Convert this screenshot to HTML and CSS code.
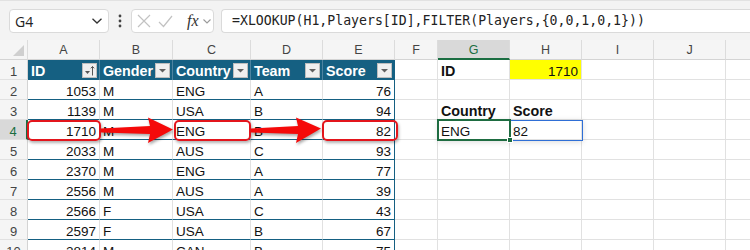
FILE: index.html
```html
<!DOCTYPE html>
<html>
<head>
<meta charset="utf-8">
<link rel="stylesheet" href="styles.css">
</head>
<body>
<div class="fbar">
  <div class="namebox"><span>G4</span><svg width="10" height="6" viewBox="0 0 10 6"><polyline points="0.5,0.8 5,5 9.5,0.8" fill="none" stroke="#333" stroke-width="1.3"/></svg></div>
  <div class="dots"><svg width="4" height="14" viewBox="0 0 4 14"><circle cx="2" cy="2" r="1.4" fill="#444"/><circle cx="2" cy="7" r="1.4" fill="#444"/><circle cx="2" cy="12" r="1.4" fill="#444"/></svg></div>
  <div class="fxbox">
    <svg class="ico-x" width="14" height="14" viewBox="0 0 14 14"><path d="M1 1L13 13M13 1L1 13" stroke="#c2c2c2" stroke-width="1.2" fill="none"/></svg>
    <svg class="ico-ok" width="15" height="13" viewBox="0 0 15 13"><polyline points="1,7 5.5,11.5 14,1" stroke="#c2c2c2" stroke-width="1.2" fill="none"/></svg>
    <span class="fx">fx</span>
    <svg class="ico-chev" width="8" height="5" viewBox="0 0 8 5"><polyline points="0.5,0.5 4,4 7.5,0.5" stroke="#9a9a9a" stroke-width="1.1" fill="none"/></svg>
  </div>
  <div class="formula">=XLOOKUP(H1,Players[ID],FILTER(Players,{0,0,1,0,1}))</div>
</div>

<div class="sheet">
  <!-- column headers -->
  <div class="ch corner"><span class="tri"></span></div>
  <div class="ch">A</div><div class="ch">B</div><div class="ch">C</div><div class="ch">D</div><div class="ch">E</div>
  <div class="ch">F</div><div class="ch sel">G</div><div class="ch">H</div><div class="ch">I</div><div class="ch">J</div><div class="ch k"></div>

  <!-- row 1 -->
  <div class="rh">1</div>
  <div class="th"><span>ID</span><span class="fbtn"><svg width="13" height="13" viewBox="0 0 13 13"><polygon points="2,7 7,7 4.5,10" fill="#555"/><path d="M9.5 11.5V2.5M7.8 4.3L9.5 2.5L11.2 4.3" stroke="#555" stroke-width="1" fill="none"/></svg></span></div>
  <div class="th"><span>Gender</span><span class="fbtn"><svg width="13" height="13" viewBox="0 0 13 13"><polygon points="3,5 10,5 6.5,8.5" fill="#606060"/></svg></span></div>
  <div class="th"><span>Country</span><span class="fbtn"><svg width="13" height="13" viewBox="0 0 13 13"><polygon points="3,5 10,5 6.5,8.5" fill="#606060"/></svg></span></div>
  <div class="th"><span>Team</span><span class="fbtn"><svg width="13" height="13" viewBox="0 0 13 13"><polygon points="3,5 10,5 6.5,8.5" fill="#606060"/></svg></span></div>
  <div class="th te"><span>Score</span><span class="fbtn"><svg width="13" height="13" viewBox="0 0 13 13"><polygon points="3,5 10,5 6.5,8.5" fill="#606060"/></svg></span></div>
  <div class="c"></div><div class="c b">ID</div><div class="c n yellow">1710</div><div class="c"></div><div class="c"></div><div class="c k"></div>

  <!-- row 2 -->
  <div class="rh">2</div>
  <div class="c t n">1053</div><div class="c t">M</div><div class="c t">ENG</div><div class="c t">A</div><div class="c t te n">76</div>
  <div class="c"></div><div class="c"></div><div class="c"></div><div class="c"></div><div class="c"></div><div class="c k"></div>

  <!-- row 3 -->
  <div class="rh">3</div>
  <div class="c t n">1139</div><div class="c t">M</div><div class="c t">USA</div><div class="c t">B</div><div class="c t te n">94</div>
  <div class="c"></div><div class="c b">Country</div><div class="c b">Score</div><div class="c"></div><div class="c"></div><div class="c k"></div>

  <!-- row 4 -->
  <div class="rh sel">4</div>
  <div class="c t n">1710</div><div class="c t">M</div><div class="c t">ENG</div><div class="c t">B</div><div class="c t te n">82</div>
  <div class="c"></div><div class="c">ENG</div><div class="c">82</div><div class="c"></div><div class="c"></div><div class="c k"></div>

  <!-- row 5 -->
  <div class="rh">5</div>
  <div class="c t n">2033</div><div class="c t">M</div><div class="c t">AUS</div><div class="c t">C</div><div class="c t te n">93</div>
  <div class="c"></div><div class="c"></div><div class="c"></div><div class="c"></div><div class="c"></div><div class="c k"></div>

  <!-- row 6 -->
  <div class="rh">6</div>
  <div class="c t n">2370</div><div class="c t">M</div><div class="c t">ENG</div><div class="c t">A</div><div class="c t te n">77</div>
  <div class="c"></div><div class="c"></div><div class="c"></div><div class="c"></div><div class="c"></div><div class="c k"></div>

  <!-- row 7 -->
  <div class="rh">7</div>
  <div class="c t n">2556</div><div class="c t">M</div><div class="c t">AUS</div><div class="c t">A</div><div class="c t te n">39</div>
  <div class="c"></div><div class="c"></div><div class="c"></div><div class="c"></div><div class="c"></div><div class="c k"></div>

  <!-- row 8 -->
  <div class="rh">8</div>
  <div class="c t n">2566</div><div class="c t">F</div><div class="c t">USA</div><div class="c t">C</div><div class="c t te n">43</div>
  <div class="c"></div><div class="c"></div><div class="c"></div><div class="c"></div><div class="c"></div><div class="c k"></div>

  <!-- row 9 -->
  <div class="rh">9</div>
  <div class="c t n">2597</div><div class="c t">F</div><div class="c t">USA</div><div class="c t">B</div><div class="c t te n">67</div>
  <div class="c"></div><div class="c"></div><div class="c"></div><div class="c"></div><div class="c"></div><div class="c k"></div>

  <!-- row 10 -->
  <div class="rh">10</div>
  <div class="c t n">2814</div><div class="c t">M</div><div class="c t">CAN</div><div class="c t">B</div><div class="c t te n">75</div>
  <div class="c"></div><div class="c"></div><div class="c"></div><div class="c"></div><div class="c"></div><div class="c k"></div>

  <!-- overlays -->
  <div class="spill"></div>
  <div class="cursor"><span class="handle"></span></div>
  <div class="hl hl-a"></div>
  <div class="hl hl-c"></div>
  <div class="hl hl-e"></div>
  <svg class="arrows" width="750" height="210" viewBox="0 0 750 210">
    <polygon class="arrow" points="101,88.5 150,86 148,77.5 173,89.5 148,103 150,94 101,92.5"/>
    <polygon class="arrow" points="251,88.5 298,86 296,77.5 321,88.5 296,103 298,94 251,92.5"/>
  </svg>
</div>
</body>
</html>
```

FILE: styles.css
```css
* { box-sizing: border-box; margin: 0; padding: 0; }

body {
  width: 750px;
  height: 250px;
  overflow: hidden;
  background: #ffffff;
  font-family: "Liberation Sans", Arial, sans-serif;
  color: #111;
}

/* ---------- formula bar ---------- */
.fbar {
  height: 40px;
  background: #f3f3f3;
  border-top: 1px solid #e2e2e2;
  display: flex;
  align-items: flex-start;
  padding: 8px 0 0 9px;
}

.namebox {
  width: 100px;
  height: 24px;
  background: #fff;
  border: 1px solid #dadada;
  border-radius: 4px;
  display: flex;
  align-items: center;
  justify-content: space-between;
  padding: 0 6px 0 5px;
  font-family: "Open Sans", "Noto Sans", sans-serif;
  font-size: 14px;
  color: #222;
}

.dots {
  width: 22px;
  height: 24px;
  display: flex;
  align-items: center;
  justify-content: center;
}

.fxbox {
  width: 83px;
  height: 24px;
  background: #fff;
  border: 1px solid #dadada;
  border-radius: 4px;
  display: flex;
  align-items: center;
  padding-left: 5px;
}
.ico-ok { margin-left: 7px; }
.fx {
  margin-left: 14px;
  font-family: "Liberation Serif", "Times New Roman", serif;
  font-style: italic;
  font-size: 16px;
  color: #333;
  line-height: 16px;
}
.ico-chev { margin-left: 4px; margin-top: 1px; }

.formula {
  flex: 1;
  height: 24px;
  margin-left: 7px;
  background: #fff;
  border: 1px solid #dadada;
  border-right: none;
  border-radius: 4px 0 0 4px;
  padding-left: 10px;
  font-family: "DejaVu Sans Mono", "Liberation Mono", monospace;
  font-size: 13.2px;
  line-height: 22px;
  color: #222;
  white-space: nowrap;
  overflow: hidden;
}

/* ---------- sheet ---------- */
.sheet {
  position: relative;
  display: grid;
  grid-template-columns: 28px 72px 73px 78px 72px 72px 43px 72px 72px 72px 72px 24px;
  grid-auto-rows: 20px;
}

.ch {
  background: #f5f5f5;
  border-right: 1px solid #dcdcdc;
  border-bottom: 1px solid #d4d4d4;
  text-align: center;
  font-size: 12.5px;
  line-height: 17px;
  padding-top: 2px;
  color: #444;
}
.ch.sel {
  background: #d9d9d9;
  color: #1b6e42;
  border-bottom: 2px solid #1b6e42;
}
.ch.k { border-right: none; }
.corner { position: relative; }
.tri {
  position: absolute;
  right: 3px;
  bottom: 3px;
  width: 0;
  height: 0;
  border-left: 11px solid transparent;
  border-bottom: 11px solid #cfcfcf;
}

.rh {
  background: #f5f5f5;
  border-right: 1px solid #d4d4d4;
  border-bottom: 1px solid #e1e1e1;
  text-align: center;
  font-size: 13px;
  line-height: 15px;
  padding-top: 4px;
  color: #444;
}
.rh.sel {
  background: #d9d9d9;
  color: #1b6e42;
  border-right: 2px solid #1b6e42;
}

.c {
  border-right: 1px solid #e1e1e1;
  border-bottom: 1px solid #e1e1e1;
  padding: 4px 3px 0 3px;
  font-size: 13.5px;
  line-height: 15px;
  white-space: nowrap;
  overflow: hidden;
}
.c.k { border-right: none; }
.n { text-align: right; }
.b { font-weight: bold; font-size: 14.3px; }
.yellow { background: #ffff00; }

/* table */
.t { border-bottom-color: #156082; }
.te { border-right-color: #156082; }

.th {
  background: #156082;
  color: #fff;
  font-weight: bold;
  font-size: 14.3px;
  display: flex;
  align-items: center;
  justify-content: space-between;
  padding: 1px 2px 0 3px;
  border-right: 1px solid #4d83a0;
  white-space: nowrap;
  overflow: hidden;
}
.th.te { border-right: 1px solid #156082; }
.fbtn {
  width: 15px;
  height: 15px;
  flex: none;
  background: #efefef;
  border: 1px solid #bdbdbd;
  display: flex;
  align-items: center;
  justify-content: center;
}

/* overlays */
.spill {
  position: absolute;
  left: 438px;
  top: 80px;
  width: 145px;
  height: 21px;
  border: 1px solid #2f6fd6;
  box-shadow: 0 1px 6px rgba(0, 0, 0, 0.14);
}
.cursor {
  position: absolute;
  left: 437px;
  top: 79px;
  width: 74px;
  height: 22px;
  border: 2px solid #1e6c41;
}
.handle {
  position: absolute;
  right: -4px;
  bottom: -4px;
  width: 6px;
  height: 6px;
  background: #1e6c41;
  border: 1px solid #fff;
}

.hl {
  position: absolute;
  top: 80px;
  height: 21px;
  border: 2px solid #e3151c;
  border-radius: 5px;
  box-shadow: 1px 2px 3px rgba(0, 0, 0, 0.3);
}
.hl-a { left: 27px; width: 74px; }
.hl-c { left: 174px; width: 77px; }
.hl-e { left: 322px; width: 76px; }

.arrows {
  position: absolute;
  left: 0;
  top: 0;
  pointer-events: none;
}
.arrow {
  fill: #f50a0a;
  filter: drop-shadow(1px 2px 1.5px rgba(0, 0, 0, 0.35));
}
```
